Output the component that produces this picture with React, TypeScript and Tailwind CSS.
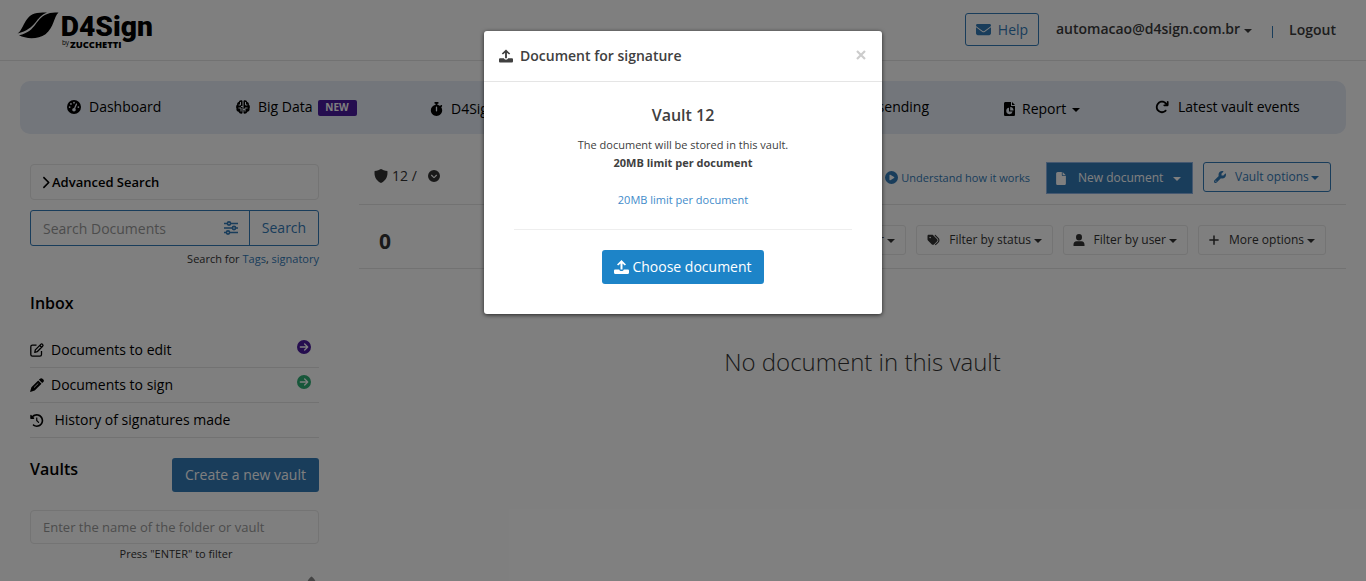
import type { ReactNode } from "react";
import {
  FaArrowRotateRight,
  FaChevronRight,
  FaCircleArrowRight,
  FaCircleChevronDown,
  FaCirclePlay,
  FaClockRotateLeft,
  FaEnvelope,
  FaFile,
  FaGaugeHigh,
  FaPlus,
  FaStopwatch,
  FaTags,
  FaWrench,
} from "react-icons/fa6";

function Caret({ className = "" }: { className?: string }) {
  return (
    <span
      className={`inline-block h-0 w-0 shrink-0 border-x-4 border-t-4 border-x-transparent border-t-current ${className}`}
    />
  );
}

function UploadIcon({ className = "" }: { className?: string }) {
  return (
    <svg viewBox="0 0 15 14" className={`shrink-0 ${className}`} fill="currentColor">
      <path d="M7.5 0 12 4.4 10.8 5.5 8.5 3.4V9.4H6.5V3.4L4.2 5.5 3 4.4Z" />
      <path d="M1.4 9.4H5.2C5.6 10.4 6.4 10.9 7.5 10.9S9.4 10.4 9.8 9.4H13.6C14.5 9.4 15 9.9 15 10.7V12.5C15 13.4 14.5 14 13.6 14H1.4C.5 14 0 13.4 0 12.5V10.7C0 9.9.5 9.4 1.4 9.4Z" />
    </svg>
  );
}

function BrainIcon() {
  return (
    <svg viewBox="0 0 14 14" className="mr-2 h-3.5 w-3.5">
      <path
        d="M5 .2C6 .1 6.600.6 7 1.200 7.400.6 8 .1 9 .2 10.500.2 11 1.200 11.200 2 12.500 2.200 13 3.300 12.800 4.500 14 5.500 14.200 7.200 13.500 8.500 14 10.200 12.800 11.600 11.400 11.800 10.800 13.600 8.400 14.400 7 13 5.600 14.400 3.200 13.600 2.600 11.800 1.200 11.600 0 10.200.5 8.500-.2 7.200 0 5.500 1.200 4.500 1 3.300 1.500 2.200 2.800 2 3 1.200 3.500.2 5 .2Z"
        fill="#000"
      />
      <path
        d="M7 0V14M4.500 2V5H2.600M9.500 2V5H11.400M2.400 8H5V11.500M11.600 8H9V11.500M5 6.500H7M7 9.500H9"
        fill="none"
        stroke="#e6ecf6"
        strokeWidth="1"
      />
    </svg>
  );
}

function ShieldIcon() {
  return (
    <svg viewBox="0 0 14 14" className="h-3.5 w-3.5" fill="currentColor">
      <path d="M7 0C8.3.8 10.8 1.8 13.4 2 13.9 6.5 12.7 11.3 7 14 1.3 11.3.1 6.5.6 2 3.2 1.8 5.700.8 7 0Z" />
    </svg>
  );
}

function EditIcon() {
  return (
    <svg viewBox="0 0 14 14" className="mr-[7px] h-3.5 w-3.5" fill="none" stroke="#000" strokeWidth="1.300" strokeLinejoin="round">
      <path d="M6.500 2.200H2.400C1.300 2.200.8 2.800.8 3.800V11.600C.8 12.600 1.300 13.200 2.400 13.200H9.900C11 13.200 11.500 12.600 11.500 11.600V8" />
      <path d="M4.800 9.300 5.300 6.900 10.800 1.400C11.400.8 12 .8 12.500 1.400 13.200 2 13.200 2.500 12.600 3.200L7.200 8.700ZM9.800 2.500 11.500 4.200" />
    </svg>
  );
}

function PencilIcon() {
  return (
    <svg viewBox="0 0 14 14" className="mr-[7px] h-3.5 w-3.5">
      <path d="M10 .8C10.800 0 11.800 0 12.500.8L13.300 1.600C14.100 2.300 14.100 3.300 13.300 4L12.200 5.100 8.900 1.800ZM8.200 2.500 11.500 5.800 4.700 12.600 0 14 1.400 9.300Z" fill="#000" />
      <path d="M4 9.600 8.300 5.400" stroke="#fff" strokeWidth=".8" fill="none" />
    </svg>
  );
}

function SlidersIcon() {
  return (
    <svg viewBox="0 0 16 16" className="h-4 w-4" fill="none" stroke="currentColor" strokeWidth="1.600">
      <path d="M1 3.500H4.500M7.500 3.500H15M1 8H9.500M12.500 8H15M1 12.500H3.500M6.500 12.500H15" />
      <circle cx="6" cy="3.500" r="1.600" />
      <circle cx="11" cy="8" r="1.600" />
      <circle cx="5" cy="12.500" r="1.600" />
    </svg>
  );
}

function ReportIcon() {
  return (
    <svg viewBox="0 0 12 14" className="h-3.5 w-3" fill="currentColor">
      <path
        fillRule="evenodd"
        d="M1.6 0H7V4H11V12.400C11 13.400 10.400 14 9.500 14H1.600C.6 14 0 13.400 0 12.400V1.600C0 .6.6 0 1.600 0ZM5 5.800A3.200 3.200 0 1 0 8.600 9.600H5ZM6.200 5V8.400H9.500A3.400 3.400 0 0 0 6.200 5Z"
      />
      <path d="M8 0 11 3H8Z" />
    </svg>
  );
}

function UserIcon() {
  return (
    <svg viewBox="0 0 12 12" className="mr-[9px] h-3 w-3" fill="currentColor">
      <path d="M6 0A3 3.300 0 0 1 6 6.600 3 3.300 0 0 1 6 0ZM3.600 7.200H8.400C10.500 7.200 11.500 8.700 11.500 10.500V12H.5V10.500C.5 8.700 1.500 7.200 3.600 7.200Z" />
    </svg>
  );
}

function Logo() {
  return (
    <svg viewBox="0 0 140 42" className="h-[42px] w-[140px]" fill="#000">
      <path d="M.5 22.500C7 19 7 4 20 2 23 1.200 27 1.300 30 1.600 18 6 20 18 .5 22.500Z" />
      <path d="M2 24.300C21 20 17 6.500 33 2 36 1.200 39 1.300 41.500 1.600 37 5 37 17 28.500 23.200 21 28.500 9 28 2 24.300Z" />
      <text
        x="43.800"
        y="25"
        fontFamily="Roboto, sans-serif"
        fontWeight="900"
        fontSize="28"
        textLength="92"
        lengthAdjust="spacingAndGlyphs"
      >
        D4Sign
      </text>
      <text x="45" y="33.500" fontFamily="Open Sans, sans-serif" fontSize="6.500" textLength="7">
        by
      </text>
      <text
        x="53"
        y="37"
        fontFamily="Open Sans, sans-serif"
        fontWeight="800"
        fontSize="9.200"
        textLength="51.500"
        lengthAdjust="spacingAndGlyphs"
      >
        ZUCCHETTI
      </text>
    </svg>
  );
}

function Header() {
  return (
    <header className="flex h-[61px] items-start border-b border-[#e4e4e4] bg-white">
      <div className="ml-[17px] mt-[11px]">
        <Logo />
      </div>
      <div className="ml-auto flex items-center pt-[13px] pr-[30px] text-[#3a3a3a]">
        <button className="flex h-[33px] w-[74px] items-center justify-center gap-[7px] rounded-[3px] border border-[#337ab7] text-[#337ab7]">
          <FaEnvelope className="h-[15px] w-[15px]" />
          <span>Help</span>
        </button>
        <span className="mb-[2px] ml-[17px] font-semibold">automacao@d4sign.com.br</span>
        <Caret className="ml-[4px] mt-[2px]" />
        <span className="mt-[4px] ml-[20px] h-[12px] w-px bg-[#337ab7]" />
        <span className="ml-[16px] mt-[1px] font-semibold">Logout</span>
      </div>
    </header>
  );
}

function NavItem({ icon, children, className }: { icon: ReactNode; children: ReactNode; className: string }) {
  return (
    <a className={`flex items-center whitespace-nowrap ${className}`}>
      {icon}
      {children}
    </a>
  );
}

function NavBar() {
  return (
    <nav className="mx-[20px] mt-[20px] flex h-[53px] items-center rounded-[10px] bg-[#e6ecf6] pb-[2px] pl-[47px] text-black">
      <NavItem icon={<FaGaugeHigh className="mr-[8px] h-[14px] w-[14px]" />} className="w-[169px]">
        Dashboard
      </NavItem>
      <NavItem icon={<BrainIcon />} className="w-[194px]">
        Big Data
        <span className="ml-[5px] mt-[2px] flex h-[16px] w-[39px] items-center justify-center rounded-[2px] bg-[#4a1a9e] text-[10px] font-bold text-white">
          NEW
        </span>
      </NavItem>
      <NavItem icon={<FaStopwatch className="mr-[8px] h-[14px] w-[13px]" />} className="mt-[4px] w-[371px]">
        D4Sign
      </NavItem>
      <NavItem icon={null} className="w-[128px] justify-end">
        sending
      </NavItem>
      <NavItem icon={<ReportIcon />} className="ml-[75px] mt-[4px] w-[151px]">
        <span className="ml-[6px]">Report</span>
        <Caret className="ml-[6px] mt-[2px]" />
      </NavItem>
      <NavItem icon={<FaArrowRotateRight className="mr-[9px] h-[14px] w-[14px]" />} className="">
        Latest vault events
      </NavItem>
    </nav>
  );
}

function InboxRow({ icon, label, action }: { icon: ReactNode; label: ReactNode; action?: ReactNode }) {
  return (
    <li className="flex h-[35px] items-center border-b border-[#e4e4e4]">
      {icon}
      {label}
      {action}
    </li>
  );
}

function Sidebar() {
  return (
    <aside className="ml-[30px] w-[289px] shrink-0 pt-[30px] text-black">
      <div className="flex h-9 items-center rounded-[4px] border border-[#e8e8e8] pl-[10px] text-[13px] font-semibold">
        <FaChevronRight className="mr-[2px] h-[13px] w-[9px]" />
        Advanced Search
      </div>
      <div className="mt-[10px] flex h-9 rounded-[3px] border border-[#337ab7] text-[#337ab7]">
        <div className="flex grow items-center justify-between pr-[10px] pl-3">
          <span className="mt-[2px] text-[#999]">Search Documents</span>
          <SlidersIcon />
        </div>
        <div className="flex w-[69px] items-center justify-center border-l border-[#337ab7]">Search</div>
      </div>
      <p className="mt-[5px] text-right text-[11px] leading-4 text-[#333]">
        Search for <a className="text-[#337ab7]">Tags</a>, <a className="text-[#337ab7]">signatory</a>
      </p>
      <h2 className="mt-[25px] text-base leading-[22px] font-semibold">Inbox</h2>
      <ul className="mt-[19px]">
        <InboxRow
          icon={<EditIcon />}
          label="Documents to edit"
          action={<FaCircleArrowRight className="mr-[8px] mb-[6px] ml-auto h-[14px] w-[14px] text-[#4a1a9e]" />}
        />
        <InboxRow
          icon={<PencilIcon />}
          label="Documents to sign"
          action={<FaCircleArrowRight className="mr-[8px] mb-[6px] ml-auto h-[14px] w-[14px] text-[#2fae75]" />}
        />
        <InboxRow icon={<FaClockRotateLeft className="mr-[11px] h-[13px] w-[13.500px]" />} label="History of signatures made" />
      </ul>
      <div className="mt-[20px] flex items-start justify-between">
        <h2 className="text-base leading-[22px] font-semibold">Vaults</h2>
        <button className="h-[34px] w-[147px] rounded-[3px] bg-[#337ab7] text-white">Create a new vault</button>
      </div>
      <div className="mt-[18px] flex h-[34px] items-center rounded-[4px] border border-[#e8e8e8] pl-3 text-[13px] text-[#999]">
        Enter the name of the folder or vault
      </div>
      <p className="mt-[2px] pl-[3px] text-center text-[11px] leading-4 text-[#333]">Press "ENTER" to filter</p>
      <svg viewBox="0 0 9 6" className="mt-[14px] ml-[277px] h-[6px] w-[9px]" fill="#888">
        <path d="M4.500.5C5.500.5 7.500 3.500 9 6H0C1.500 3.500 3.500.5 4.500.5Z" />
      </svg>
    </aside>
  );
}

function FilterButton({ icon, label, className }: { icon: ReactNode; label: string; className: string }) {
  return (
    <button
      className={`flex h-[30px] items-center justify-end rounded-[3px] border border-[#e8e8e8] pr-[10px] text-xs whitespace-nowrap ${className}`}
    >
      {icon}
      {label}
      <Caret className="ml-[3px] mt-[2px]" />
    </button>
  );
}

function MainPanel() {
  return (
    <main className="ml-[40px] w-[987px] shrink-0 text-[#333]">
      <div className="flex h-[71px] items-start border-b border-[#e4e4e4] pr-[15px] pl-[15px]">
        <div className="mt-[32px] flex items-center">
          <ShieldIcon />
          <span className="ml-[4px]">12 /</span>
          <FaCircleChevronDown className="ml-[11px] h-[12px] w-[12px]" />
        </div>
        <a className="mt-[35px] ml-auto flex items-center text-[11px] leading-[18px] text-[#337ab7]">
          <FaCirclePlay className="mr-[3px] mb-[2px] h-[13px] w-[13px]" />
          Understand how it works
        </a>
        <button className="mt-[29px] ml-[17px] flex h-[30px] w-[145px] items-center bg-[#337ab7] pl-[9px] text-xs text-white shadow-[0_0_0_1px_#8ab0e0]">
          <FaFile className="h-[13px] w-[10px]" />
          <span className="ml-[12px]">New document</span>
          <Caret className="ml-[10px] mt-[2px]" />
        </button>
        <button className="mt-[28px] ml-[11px] flex h-[30px] w-[128px] items-center rounded-[3px] border border-[#337ab7] pl-[10px] text-xs text-[#337ab7]">
          <FaWrench className="mr-[9px] h-[12px] w-[12px]" />
          Vault options
          <Caret className="ml-[2px] mt-[2px]" />
        </button>
      </div>
      <div className="flex h-16 items-start border-b border-[#e4e4e4] pl-5">
        <strong className="mt-[21px] text-[21px] leading-[30px]">0</strong>
        <div className="mt-[20px] mr-[20px] ml-auto flex gap-[10px]">
          <FilterButton icon={null} label="r" className="w-[40px]" />
          <FilterButton icon={<FaTags className="mr-[9px] h-[12px] w-[13px]" />} label="Filter by status" className="w-[137px]" />
          <FilterButton icon={<UserIcon />} label="Filter by user" className="w-[125px]" />
          <FilterButton icon={<FaPlus className="mr-[9px] h-[12px] w-[12px]" />} label="More options" className="w-[128px]" />
        </div>
      </div>
      <p className="mt-[75px] pl-[20px] text-center text-2xl leading-[36px] font-light">No document in this vault</p>
    </main>
  );
}

function UploadModal() {
  return (
    <section className="mt-[31px] h-[283px] w-[398px] rounded-[3px] bg-white text-[#404040] shadow-[0_1px_4px_rgba(0,0,0,0.7)]">
      <div className="flex h-[51px] items-center border-b border-[#e5e5e5] pr-[16px] pl-[15px]">
        <UploadIcon className="h-[14px] w-[14px]" />
        <h1 className="ml-[7px] font-semibold">Document for signature</h1>
        <svg viewBox="0 0 10 10" className="mb-[3px] ml-auto h-[10px] w-[10px]" stroke="#ccc" strokeWidth="2.200">
          <path d="M1 1 9 9M9 1 1 9" />
        </svg>
      </div>
      <div className="flex flex-col items-center px-[30px] pt-[22px]">
        <h2 className="text-base leading-[22px] font-semibold">Vault 12</h2>
        <p className="mt-[10px] text-[11px] leading-[18px]">The document will be stored in this vault.</p>
        <p className="text-[11px] leading-[18px] font-bold">20MB limit per document</p>
        <a className="mt-[19px] text-[11px] leading-[18px] text-[#428bca]">20MB limit per document</a>
        <hr className="mt-[20px] w-full border-[#eee]" />
        <button className="mt-[20px] flex h-[34px] w-[162px] items-center justify-center gap-[3px] rounded-[3px] bg-[#1d84c8] text-white">
          <UploadIcon className="h-[14px] w-[15px]" />
          Choose document
        </button>
      </div>
    </section>
  );
}

export default function App() {
  return (
    <div className="relative h-[581px] w-[1366px] overflow-hidden bg-white font-['Open_Sans',sans-serif] text-sm">
      <Header />
      <NavBar />
      <div className="flex">
        <Sidebar />
        <MainPanel />
      </div>
      <div className="absolute inset-0 flex items-start justify-center bg-black/50">
        <UploadModal />
      </div>
    </div>
  );
}
